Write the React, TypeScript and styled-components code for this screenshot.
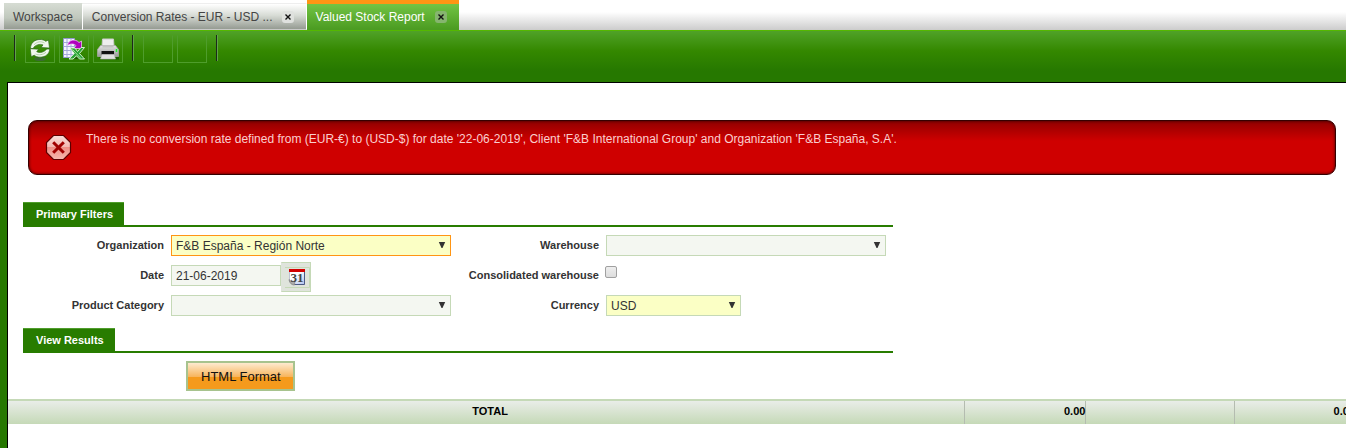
import React from 'react';
import styled, { createGlobalStyle } from 'styled-components';

const Global = createGlobalStyle`
  * { box-sizing: border-box; }
  html, body, #root { height: 100%; }
  body { margin: 0; overflow: hidden; background: #267800; color: #333; font: 12px/16px "Liberation Sans", Arial, sans-serif; }
  button, input, select { font-family: inherit; margin: 0; }
`;

const Page = styled.div`
  min-height: 100vh;
  display: flex;
  flex-direction: column;
`;

const TabBar = styled.nav`
  height: 30px;
  display: flex;
  align-items: flex-end;
  padding-left: 4px;
  background: linear-gradient(#fff 12px, #ccc);
`;

const Tab = styled.div<{ $kind: 'home' | 'idle' | 'active' }>`
  display: flex;
  align-items: center;
  height: ${p => (p.$kind === 'active' ? 30 : 27)}px;
  padding: ${p => (p.$kind === 'home' ? '0 9px' : '0 12px 0 9px')};
  gap: ${p => (p.$kind === 'active' ? 10 : 9)}px;
  color: ${p => (p.$kind === 'active' ? '#fff' : '#444')};
  border-right: ${p => (p.$kind === 'active' ? 0 : 1)}px solid #fff;
  border-top: ${p => (p.$kind === 'active' ? '4px solid #ff9514' : p.$kind === 'idle' ? '1px solid #eee' : '1px solid #d5dbd2')};
  border-bottom: ${p => (p.$kind === 'active' ? '1px solid #4c9c22' : '1px solid #c8c8c8')};
  background: ${p =>
    p.$kind === 'active'
      ? 'linear-gradient(#72c444, #4c9c22)'
      : p.$kind === 'idle'
        ? 'linear-gradient(#fff, #d8dcd6 45%, #959b92)'
        : 'linear-gradient(#d5dbd2, #c0c8bd 55%, #959b92)'};
`;

const TabLabel = styled.button`
  border: 0;
  padding: 0;
  background: none;
  color: inherit;
  font-size: 12px;
  line-height: 16px;
  white-space: nowrap;
`;

const CloseButton = styled.button<{ $active?: boolean }>`
  width: 12px;
  height: 12px;
  padding: 0;
  border: 0;
  border-radius: 3px;
  display: flex;
  align-items: center;
  justify-content: center;
  background: ${p => (p.$active ? '#86b56f' : '#dfe1de')};
  color: #111;
`;

const Toolbar = styled.header`
  height: 52px;
  display: flex;
  align-items: flex-start;
  padding: 4px 14px 0;
  border-top: 1px solid #54b800;
  background: linear-gradient(#50a228, #348800 20px, #267800 40px);
`;

const Separator = styled.span`
  width: 2px;
  height: 26px;
  background: linear-gradient(90deg, #1c2a1c 50%, #62a34a 50%);
`;

const ToolGroup = styled.div`
  display: flex;
  gap: 4px;
  padding: 0 9px;
`;

const ToolButton = styled.button`
  width: 30px;
  height: 28px;
  padding: 0;
  border: 1px solid #4f9d2c;
  border-top-color: transparent;
  background: none;
  display: flex;
  align-items: center;
  justify-content: center;
`;

const Content = styled.main`
  flex: 1;
  margin-left: 7px;
  border-left: 1px solid #000;
  border-top: 1px solid #000;
  background: #fff;
`;

const ErrorBox = styled.div`
  display: flex;
  min-height: 55px;
  margin: 37px 10px 27px 20px;
  padding: 10px 16px;
  gap: 14px;
  border: 1px solid #360000;
  border-radius: 9px;
  color: #f9cfcf;
  background: linear-gradient(#900000, #cf0000 20px);
  box-shadow: inset 0 0 3px #300000;
`;

const ErrorIcon = styled.svg`
  flex: none;
  margin-top: 3px;
`;

const Section = styled.section`
  max-width: 870px;
  margin-left: 15px;
`;

const SectionHead = styled.div`
  display: flex;
  border-bottom: 2px solid #287c00;
`;

const SectionTitle = styled.h2`
  margin: 0;
  height: 23px;
  padding: 3px 11px 0 13px;
  border-top: 1px solid #4f9d2c;
  background: #287c00;
  color: #fff;
  font-size: 11px;
  line-height: 16px;
`;

const Filters = styled.form`
  display: grid;
  grid-template-columns: 141px 280px 141px 280px;
  column-gap: 7px;
  grid-auto-rows: 30px;
  padding-top: 8px;
  height: 101px;
`;

const Label = styled.label`
  padding-top: 2px;
  text-align: right;
  font-size: 11px;
  font-weight: bold;
`;

const SelectWrap = styled.div<{ $short?: boolean }>`
  position: relative;
  width: ${p => (p.$short ? 135 : 280)}px;
  height: 21px;
`;

const Select = styled.select<{ $required?: boolean; $focus?: boolean }>`
  appearance: none;
  width: 100%;
  height: 21px;
  padding: 0 4px;
  border: 1px solid ${p => (p.$focus ? '#ff9514' : '#c5d9b7')};
  border-radius: 0;
  background: ${p => (p.$required ? '#fbffc5' : '#f4f7f1')};
  color: #333;
  font-size: 12px;
`;

const Arrow = styled.svg`
  position: absolute;
  right: 5px;
  top: 7px;
  pointer-events: none;
`;

const DateField = styled.div`
  display: flex;
  align-items: flex-start;
`;

const DateInput = styled.input`
  width: 110px;
  height: 21px;
  padding: 0 4px;
  border: 1px solid #c5d9b7;
  background: #f4f7f1;
  color: #333;
  font-size: 12px;
`;

const CalendarButton = styled.button`
  width: 30px;
  height: 30px;
  margin-top: -3px;
  padding: 0;
  border: 1px solid #c5d9b7;
  border-left-color: #dfe4dc;
  background: #dfe4dc;

  svg { display: block; }
`;

const CheckBox = styled.input`
  appearance: none;
  display: block;
  width: 12px;
  height: 12px;
  margin-left: -1px;
  margin-top: 1px;
  border: 1px solid #a0a0a0;
  border-radius: 2px;
  background: linear-gradient(#eee, #ddd);
`;

const Actions = styled.div`
  padding: 8px 0 8px 163px;
`;

const FormatButton = styled.button`
  display: block;
  height: 30px;
  padding: 0 12px 0 13px;
  border: 2px solid #a7c38e;
  background: linear-gradient(#fdebd0, #f7b35a 14px, #f59a1c 14px);
  color: #111;
  font-size: 13px;
`;

const TotalsScroll = styled.div`
  overflow: hidden;
`;

const Totals = styled.table`
  width: calc(100% + 10px);
  height: 25px;
  table-layout: fixed;
  border-collapse: separate;
  border-spacing: 0;
  border-top: 2px solid #c5d9b7;
  background: linear-gradient(#e9ede8, #c5d9b7);
  color: #000;
  font-size: 11px;
  font-weight: bold;
`;

const Column = styled.col<{ $share: number }>`
  width: ${p => p.$share}%;
`;

const Cell = styled.td<{ $center?: boolean }>`
  padding: ${p => (p.$center ? '0 0 3px 8px' : '0 0 3px')};
  text-align: ${p => (p.$center ? 'center' : 'right')};
  border-right: 1px solid #b4bcb0;
  line-height: 16px;
`;

const CloseGlyph = () => (
  <svg width="6" height="6" viewBox="0 0 6 6" stroke="currentColor" strokeWidth="1.4">
    <path d="M.5 .5 5.500 5.500M5.500 .5 .5 5.500" />
  </svg>
);

const DropArrow = () => (
  <Arrow width="8" height="6" viewBox="0 0 8 6">
    <path d="M.8 0h6.400L4.500 6h-1z" fill="#333" />
  </Arrow>
);

const RefreshIcon = () => (
  <svg width="24" height="26" viewBox="0 0 24 26">
    <ellipse cx="12" cy="23" rx="6" ry="2" fill="#3c6a34" />
    <g fill="#f0f7ee" stroke="#2c6a18" strokeWidth=".7" strokeLinejoin="round">
      <path d="M2.500 12.500C2.500 7 6.500 3.500 12 3.500c2.500 0 4.200.6 5.700 1.800L20.500 4l1 8-8.500-.5 2-2.600C12 7.600 7 8.800 5 12.500z" />
      <path d="M21.700 13C21.500 18 17.500 21.200 12 21.200c-2.500 0-4.400-.8-5.800-2L3.200 20.700l-1-8 8.500.5-2 2.500c3 1.600 7.500.6 10-2.700z" />
    </g>
    <path d="M6 8.800C9 5.500 13 5 16.500 7M18 16.200c-2.500 2.600-7.500 3.300-10.500 1.800" fill="none" stroke="#b4d0ab" strokeWidth="1" />
  </svg>
);

const ExcelIcon = () => (
  <svg width="24" height="24" viewBox="0 0 24 24">
    <path d="M7 22h15l1-2H10z" fill="#174c04" opacity=".7" />
    <path d="M1.500 1.500h11v19h-11z" fill="#f5f6ff" stroke="#8f96cb" />
    <path d="M1.500 5.500h11M1.500 9.500h11M1.500 13.500h11M1.500 17.500h11M5 1.500v19M9 1.500v19" stroke="#a4aad8" />
    <path d="M5.500 8.500C6.500 2.500 13.500 1.500 17 5.500L19.500 4V11.500h-8l2.500-2.800C12 6.500 8.500 6.500 5.500 8.500z" fill="#b000bd" stroke="#f6cfff" strokeWidth=".7" />
    <path d="M8 11h5l2.500 3.500L19 10.500h3.500L17.500 16.500l5 5.500h-5l-3-3.200-3.500 3.200H7l5.300-5.500z" fill="#2ca338" stroke="#e3f8dc" strokeWidth=".9" />
    <path d="M10.500 12.500l8 8.500" stroke="#a4e59c" strokeWidth="1" />
  </svg>
);

const PrinterIcon = () => (
  <svg width="24" height="24" viewBox="0 0 24 24">
    <defs>
      <linearGradient id="printerBody" x1="0" y1="0" x2="0" y2="1">
        <stop offset="0" stopColor="#e4e4e4" />
        <stop offset="1" stopColor="#999" />
      </linearGradient>
    </defs>
    <path d="M3 20h20v2.500H5z" fill="#174c04" opacity=".7" />
    <path d="M6.500 2h11l.5 7h-12z" fill="#eee" stroke="#ccc" />
    <path d="M4.500 8.500h15l3 4v7h-21v-7z" fill="url(#printerBody)" stroke="#aaa" strokeWidth=".7" />
    <path d="M6.500 8.500h11v2h-11z" fill="#c2c2c2" />
    <path d="M5.500 14h12.500v3.500H5.500z" fill="#111" />
    <path d="M6 17.500h12l1.500 4.500h-15z" fill="#e0e0e0" stroke="#bbb" strokeWidth=".6" />
    <path d="M20.500 12v3" stroke="#1cf22a" strokeWidth="1.500" />
  </svg>
);

const CalendarIcon = () => (
  <svg width="28" height="28" viewBox="0 0 28 28">
    <defs>
      <linearGradient id="calendarPage" x1="0" y1="0" x2="1" y2="1">
        <stop offset=".4" stopColor="#fff" />
        <stop offset="1" stopColor="#a9bff0" />
      </linearGradient>
    </defs>
    <path d="M3 4.500h24.500v20H3" fill="none" stroke="#c5d9b7" />
    <path d="M7.500 7h15v14.500h-11l-4-3.500z" fill="url(#calendarPage)" stroke="#bfc4d4" />
    <path d="M22.500 8v13.500h-10" fill="none" stroke="#4d5a86" />
    <path d="M7 6h16v3H7z" fill="#d30000" />
    <path d="M7 16.500c1.500 2 4 2 6 1.500l-.5 4c-2.500 0-5-1.500-5.500-5.500z" fill="#aaa" stroke="#777" strokeWidth=".6" />
    <text x="15" y="19" textAnchor="middle" fontFamily="Liberation Serif, serif" fontSize="13" fontWeight="bold" fill="#444">31</text>
  </svg>
);

export default function App() {
  return (
    <Page>
      <Global />
      <TabBar>
        <Tab $kind="home"><TabLabel>Workspace</TabLabel></Tab>
        <Tab $kind="idle">
          <TabLabel>Conversion Rates - EUR - USD ...</TabLabel>
          <CloseButton aria-label="Close Conversion Rates"><CloseGlyph /></CloseButton>
        </Tab>
        <Tab $kind="active">
          <TabLabel>Valued Stock Report</TabLabel>
          <CloseButton $active aria-label="Close Valued Stock Report"><CloseGlyph /></CloseButton>
        </Tab>
      </TabBar>
      <Toolbar>
        <Separator />
        <ToolGroup>
          <ToolButton aria-label="Refresh"><RefreshIcon /></ToolButton>
          <ToolButton aria-label="Export to Excel"><ExcelIcon /></ToolButton>
          <ToolButton aria-label="Print"><PrinterIcon /></ToolButton>
        </ToolGroup>
        <Separator />
        <ToolGroup>
          <ToolButton aria-label="Email" disabled />
          <ToolButton aria-label="Attach" disabled />
        </ToolGroup>
        <Separator />
      </Toolbar>
      <Content>
        <ErrorBox role="alert">
          <ErrorIcon width="27" height="27" viewBox="0 0 27 27">
            <defs>
              <linearGradient id="errorFace" x1="0" y1="0" x2="0" y2="1">
                <stop offset="0" stopColor="#f9dcd8" />
                <stop offset=".5" stopColor="#f3b5ae" />
                <stop offset=".5" stopColor="#ee8f86" />
                <stop offset="1" stopColor="#f6b9b0" />
              </linearGradient>
            </defs>
            <path d="M8.500 1.500h10l7 7v10l-7 7h-10l-7-7v-10z" fill="url(#errorFace)" stroke="#5c0000" strokeWidth="1.200" />
            <path d="M8.200 8.200l10.600 10.600M18.800 8.200l-10.600 10.600" stroke="#a00000" strokeWidth="3" />
          </ErrorIcon>
          <span>There is no conversion rate defined from (EUR-€) to (USD-$) for date '22-06-2019', Client 'F&amp;B International Group' and Organization 'F&amp;B España, S.A'.</span>
        </ErrorBox>
        <Section>
          <SectionHead><SectionTitle>Primary Filters</SectionTitle></SectionHead>
          <Filters>
            <Label htmlFor="organization">Organization</Label>
            <SelectWrap>
              <Select id="organization" $required $focus><option>F&amp;B España - Región Norte</option></Select>
              <DropArrow />
            </SelectWrap>
            <Label htmlFor="warehouse">Warehouse</Label>
            <SelectWrap><Select id="warehouse"><option /></Select><DropArrow /></SelectWrap>
            <Label htmlFor="date">Date</Label>
            <DateField>
              <DateInput id="date" defaultValue="21-06-2019" />
              <CalendarButton type="button" aria-label="Choose date"><CalendarIcon /></CalendarButton>
            </DateField>
            <Label htmlFor="consolidated">Consolidated warehouse</Label>
            <div><CheckBox id="consolidated" type="checkbox" /></div>
            <Label htmlFor="category">Product Category</Label>
            <SelectWrap><Select id="category"><option /></Select><DropArrow /></SelectWrap>
            <Label htmlFor="currency">Currency</Label>
            <SelectWrap $short>
              <Select id="currency" $required><option>USD</option></Select>
              <DropArrow />
            </SelectWrap>
          </Filters>
        </Section>
        <Section>
          <SectionHead><SectionTitle>View Results</SectionTitle></SectionHead>
          <Actions><FormatButton>HTML Format</FormatButton></Actions>
        </Section>
        <TotalsScroll>
          <Totals>
            <colgroup>
              <Column $share={71} />
              <Column $share={9} />
              <Column $share={11} />
              <Column $share={9} />
            </colgroup>
            <tbody>
              <tr><Cell $center>TOTAL</Cell><Cell>0.00</Cell><Cell /><Cell>0.00</Cell></tr>
            </tbody>
          </Totals>
        </TotalsScroll>
      </Content>
    </Page>
  );
}
